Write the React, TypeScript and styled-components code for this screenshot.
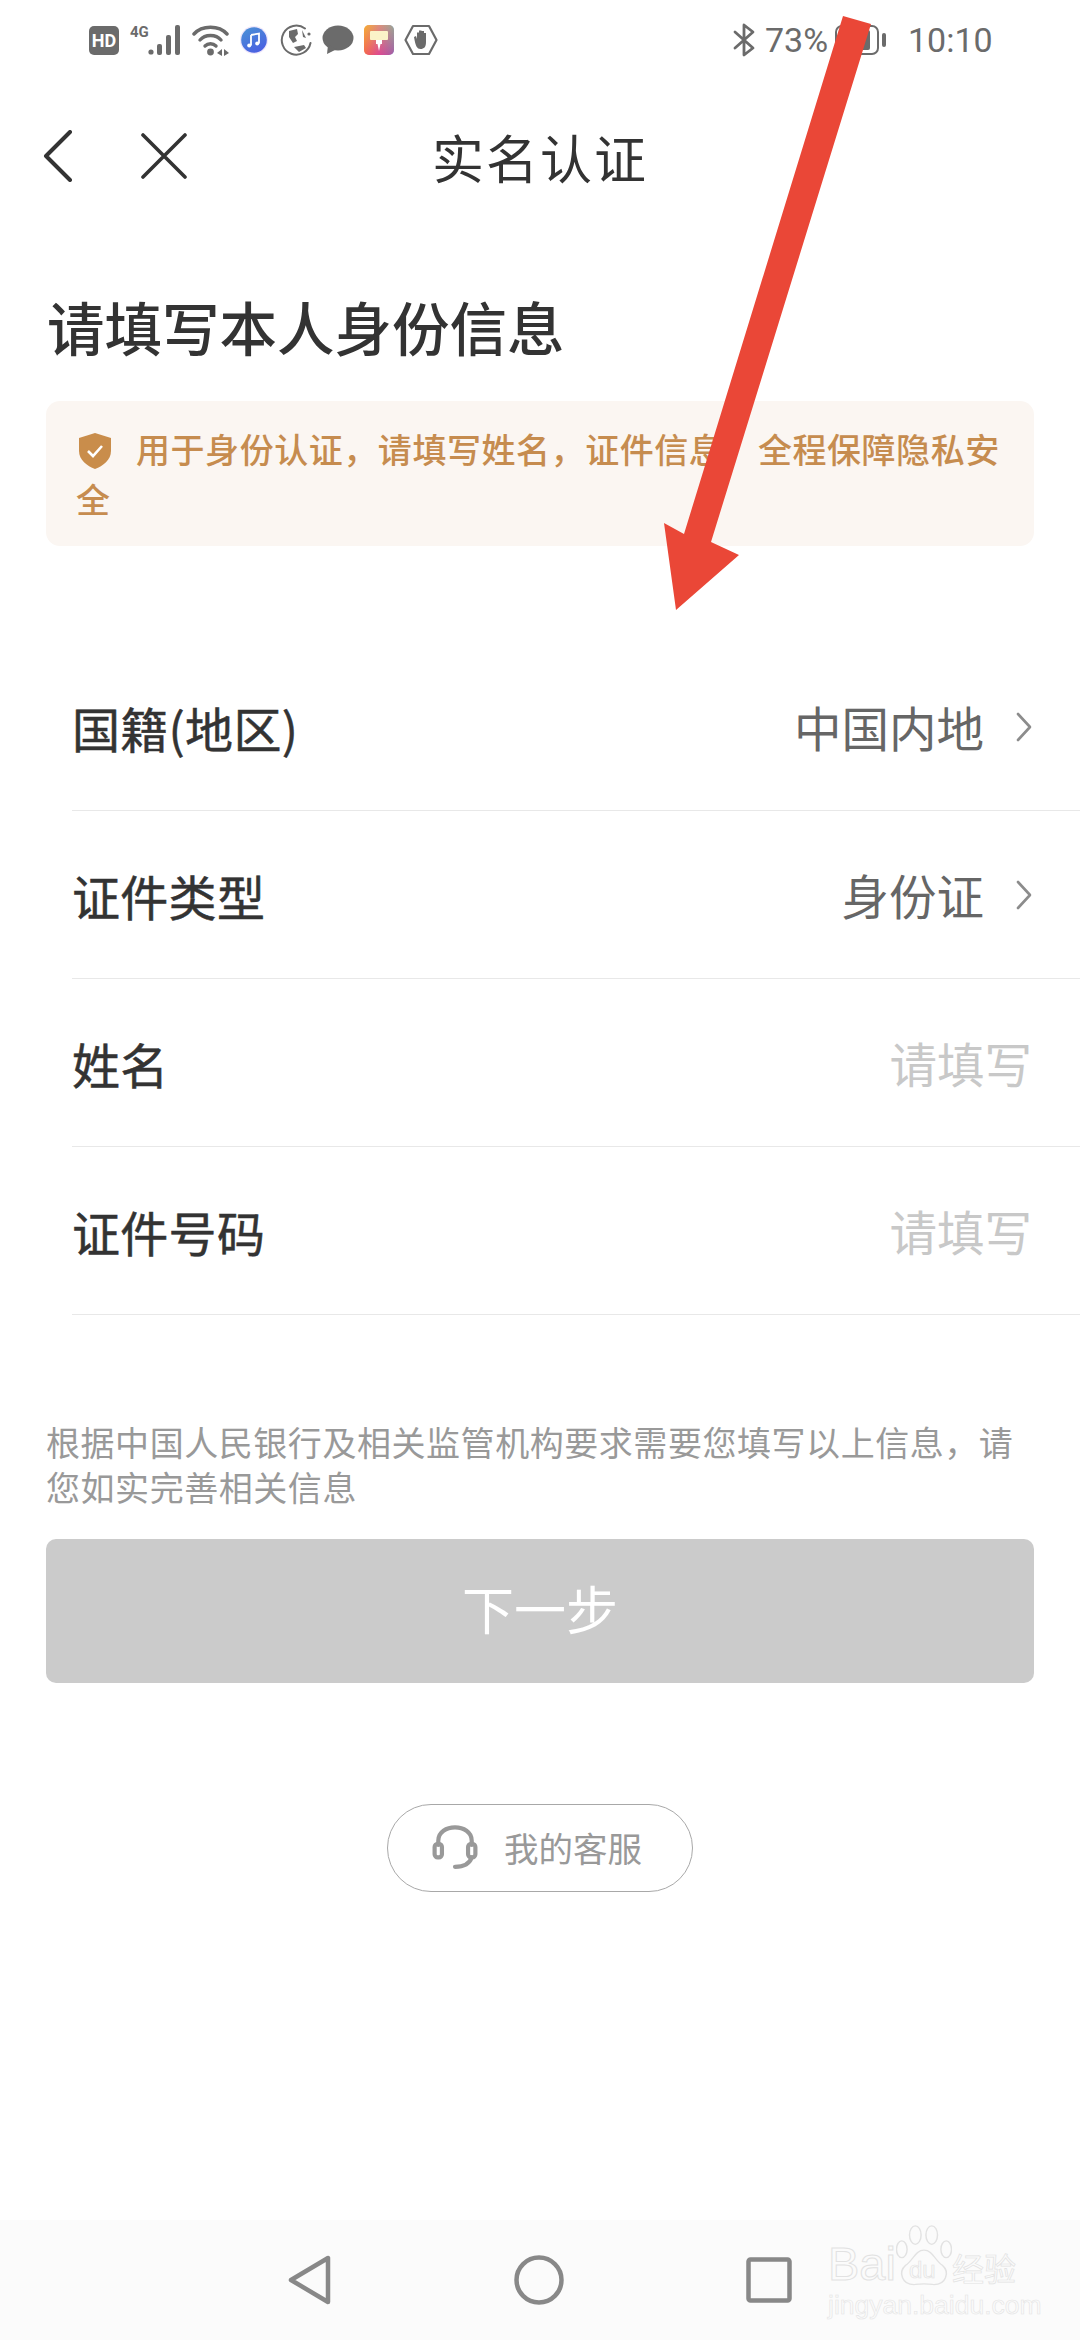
import * as React from "react";
import styled, { createGlobalStyle } from "styled-components";

const CJK = `"Noto Sans CJK SC", "Noto Sans", sans-serif`;

const Global = createGlobalStyle`
  html, body {
    margin: 0;
    padding: 0;
    background: #fff;
    font-family: ${CJK};
  }
  * { box-sizing: border-box; }
`;

const rows = [
  { label: "国籍(地区)", value: "中国内地", arrow: true },
  { label: "证件类型", value: "身份证", arrow: true },
  { label: "姓名", value: "请填写", arrow: false },
  { label: "证件号码", value: "请填写", arrow: false },
];

const App: React.FC = () => {
  return (
    <Page>
      <Global />
      <StatusBar>
        <StatusLeft>
          <HdBadge>HD</HdBadge>
          <SignalWrap>
            <FourG>4G</FourG>
            <svg width="34" height="30" viewBox="0 0 34 30">
              <circle cx="3" cy="27" r="2.6" fill="#6b6b6b" />
              <rect x="9" y="19" width="5" height="11" rx="2" fill="#6b6b6b" />
              <rect x="18" y="10" width="5" height="20" rx="2" fill="#6b6b6b" />
              <rect x="27" y="0" width="5" height="30" rx="2" fill="#6b6b6b" />
            </svg>
          </SignalWrap>
          <svg width="38" height="32" viewBox="0 0 38 32">
            <g fill="none" stroke="#6b6b6b" strokeWidth="3.4" strokeLinecap="round">
              <path d="M2 10 C 10 1, 27 1, 35 10" />
              <path d="M8 16 C 13 10, 24 10, 29 16" />
              <path d="M13 22 C 16 19, 21 19, 24 22" />
            </g>
            <circle cx="18.5" cy="28" r="3.4" fill="#6b6b6b" />
            <path d="M30 25 L25 29 L30 32 Z M32 25 L37 29 L32 32 Z" fill="#6b6b6b" />
          </svg>
          <MusicIcon>
            <svg width="28" height="28" viewBox="0 0 28 28">
              <defs>
                <linearGradient id="music" x1="0.2" y1="0" x2="0.7" y2="1">
                  <stop offset="0" stopColor="#4b8fd6" />
                  <stop offset="1" stopColor="#4a5fe2" />
                </linearGradient>
              </defs>
              <circle cx="14" cy="14" r="14" fill="#efe6fb" />
              <circle cx="14" cy="14" r="12.8" fill="url(#music)" />
              <path d="M11 9 L19 7.5 V17.5 M11 9 V19.5" fill="none" stroke="#fff" strokeWidth="1.8" />
              <circle cx="9.2" cy="19.6" r="2" fill="#fff" />
              <circle cx="17.2" cy="17.6" r="2" fill="#fff" />
            </svg>
          </MusicIcon>
          <svg width="32" height="32" viewBox="0 0 32 32">
            <path d="M25 4.5 A14.5 14.5 0 1 0 30.5 19" fill="none" stroke="#6b6b6b" strokeWidth="2" strokeLinecap="round" />
            <circle cx="29" cy="10" r="1.6" fill="#6b6b6b" />
            <path d="M9 7 L17 5 L18 10 L15 13 L17 17 L13 19 L9 13 Z M14 23 L24 21 L26 24 L19 28 Z M22 6 L26 14 L23 13 Z" fill="#6b6b6b" />
          </svg>
          <svg width="32" height="30" viewBox="0 0 32 30">
            <ellipse cx="16" cy="13" rx="15.5" ry="12.5" fill="#6b6b6b" />
            <path d="M6 20 L5 29 L15 24 Z" fill="#6b6b6b" />
          </svg>
          <svg width="30" height="30" viewBox="0 0 30 30">
            <defs>
              <linearGradient id="brushBase" x1="0" y1="0" x2="1" y2="0">
                <stop offset="0" stopColor="#f79a2e" />
                <stop offset="0.5" stopColor="#c45cc0" />
                <stop offset="1" stopColor="#3f8cf0" />
              </linearGradient>
              <linearGradient id="brushFade" x1="0" y1="0" x2="0" y2="1">
                <stop offset="0" stopColor="#f5c13a" stopOpacity="0.5" />
                <stop offset="1" stopColor="#f2386a" stopOpacity="0.55" />
              </linearGradient>
            </defs>
            <rect width="30" height="30" rx="5" fill="url(#brushBase)" />
            <rect width="30" height="30" rx="5" fill="url(#brushFade)" />
            <rect x="6" y="6" width="18" height="9" rx="1" fill="#fbf3c8" />
            <path d="M12 15 H18 V19 H16.5 L15 26 L13.5 19 H12 Z" fill="#fff" />
          </svg>
          <svg width="34" height="32" viewBox="0 0 34 32">
            <path d="M9 2 H25 L32.5 16 L25 30 H9 L1.5 16 Z" fill="none" stroke="#6b6b6b" strokeWidth="2.2" strokeLinejoin="round" />
            <path d="M10 13 L12 12 L13 15 V8.5 H15 V14 V6.5 H17.5 V14 V7 H20 V14 V9 H22 V18 C22 23 20 25 16.5 25 C13 25 11.5 22 10 13 Z" fill="#6b6b6b" />
          </svg>
        </StatusLeft>
        <StatusRight>
          <svg width="22" height="34" viewBox="0 0 22 34">
            <path d="M2 9 L20 25 L11 32 V2 L20 9 L2 25" fill="none" stroke="#6b6b6b" strokeWidth="2.8" strokeLinecap="round" strokeLinejoin="round" />
          </svg>
          <StatusText>73%</StatusText>
          <BatteryIcon>
            <svg width="51" height="30" viewBox="0 0 51 30">
              <rect x="1" y="1" width="42" height="28" rx="6" fill="none" stroke="#6b6b6b" strokeWidth="2" />
              <rect x="5" y="5" width="30" height="20" rx="2" fill="#6b6b6b" />
              <rect x="47" y="8" width="4" height="14" rx="2" fill="#6b6b6b" />
            </svg>
          </BatteryIcon>
          <StatusClock>10:10</StatusClock>
        </StatusRight>
      </StatusBar>

      <NavBar>
        <NavIcons>
          <svg width="30" height="52" viewBox="0 0 30 52">
            <path d="M27 2 L3 26 L27 50" fill="none" stroke="#333" strokeWidth="4" strokeLinecap="round" strokeLinejoin="round" />
          </svg>
          <svg width="46" height="46" viewBox="0 0 46 46">
            <path d="M2 2 L44 44 M44 2 L2 44" stroke="#333" strokeWidth="3.6" strokeLinecap="round" />
          </svg>
        </NavIcons>
        <NavTitle>实名认证</NavTitle>
      </NavBar>

      <Heading>请填写本人身份信息</Heading>

      <Notice>
        <ShieldIcon>
          <svg width="34" height="36" viewBox="0 0 34 36">
            <path d="M17 0 L33 5 V18 C33 27 25 33 17 36 C9 33 1 27 1 18 V5 Z" fill="#c98d4b" />
            <path d="M10 18 L15 23 L24 13" fill="none" stroke="#fff" strokeWidth="2.6" />
          </svg>
        </ShieldIcon>
        用于身份认证，请填写姓名，证件信息，全程保障隐私安全
      </Notice>

      <Form>
        {rows.map((row) => (
          <Row key={row.label}>
            <RowLabel>{row.label}</RowLabel>
            <RowValue $placeholder={!row.arrow}>{row.value}</RowValue>
            {row.arrow && (
              <svg width="16" height="30" viewBox="0 0 16 30">
                <path d="M2 2 L14 15 L2 28" fill="none" stroke="#8c8c8c" strokeWidth="2.6" strokeLinecap="round" strokeLinejoin="round" />
              </svg>
            )}
          </Row>
        ))}
      </Form>

      <Hint>根据中国人民银行及相关监管机构要求需要您填写以上信息，请您如实完善相关信息</Hint>

      <NextButton>下一步</NextButton>

      <SupportWrap>
        <SupportPill>
          <svg width="46" height="46" viewBox="0 0 44 44">
            <g fill="none" stroke="#999" strokeWidth="4" strokeLinecap="round">
              <path d="M6 20 V16 C6 -1 38 -1 38 16 V20" />
              <rect x="2.5" y="19" width="7" height="13" rx="3" />
              <rect x="34.5" y="19" width="7" height="13" rx="3" />
              <path d="M38 32 C36 38 30 41 22 41" />
            </g>
          </svg>
          <SupportText>我的客服</SupportText>
        </SupportPill>
      </SupportWrap>

      <BottomNav>
        <svg width="44" height="50" viewBox="0 0 44 50">
          <path d="M40 3 V47 L3 25 Z" fill="none" stroke="#888" strokeWidth="4.5" strokeLinejoin="round" />
        </svg>
        <svg width="50" height="50" viewBox="0 0 50 50">
          <circle cx="25" cy="25" r="22.5" fill="none" stroke="#888" strokeWidth="4.5" />
        </svg>
        <svg width="46" height="46" viewBox="0 0 46 46">
          <rect x="2.5" y="2.5" width="41" height="41" rx="2" fill="none" stroke="#888" strokeWidth="4.5" />
        </svg>
      </BottomNav>

      <Watermark>
        <WatermarkTop>
          <WatermarkWord>Bai</WatermarkWord>
          <PawBox>
            <svg width="56" height="62" viewBox="0 0 58 74" preserveAspectRatio="none">
              <g fill="none" stroke="#e2e2e2" strokeWidth="1.5">
                <ellipse cx="6" cy="29" rx="5.5" ry="10" />
                <ellipse cx="20" cy="12" rx="6" ry="11" />
                <ellipse cx="37" cy="12" rx="6" ry="11" />
                <ellipse cx="52" cy="29" rx="5.5" ry="10" />
                <path d="M29 30 C38 30 40 42 48 48 C56 56 52 72 38 71 C32 70 26 70 20 71 C6 72 2 56 10 48 C18 42 20 30 29 30 Z" />
              </g>
            </svg>
            <PawText>du</PawText>
          </PawBox>
          <WatermarkCn>经验</WatermarkCn>
        </WatermarkTop>
        <WatermarkUrl>jingyan.baidu.com</WatermarkUrl>
      </Watermark>

      <ArrowOverlay width="1080" height="2340" viewBox="0 0 1080 2340">
        <polygon
          points="843,16 871,24 711,542 739,555 676,610 664,523 684,534"
          fill="#ea4737"
        />
      </ArrowOverlay>
    </Page>
  );
};

const Page = styled.div`
  position: relative;
  width: 1080px;
  height: 2340px;
  display: flex;
  flex-direction: column;
  overflow: hidden;
  background: #fff;
`;

const StatusBar = styled.div`
  height: 80px;
  padding: 0 90px 0 89px;
  display: flex;
  align-items: center;
  justify-content: space-between;
`;

const StatusLeft = styled.div`
  display: flex;
  align-items: center;
  gap: 10px;
`;

const StatusRight = styled.div`
  display: flex;
  align-items: center;
`;

const HdBadge = styled.div`
  width: 30px;
  height: 29px;
  border-radius: 5px;
  background: #6b6b6b;
  color: #fff;
  font: 700 18px/29px Roboto, sans-serif;
  text-align: center;
`;

const SignalWrap = styled.div`
  display: flex;
  align-items: flex-end;
  height: 30px;
  margin-left: 1px;
`;

const FourG = styled.span`
  align-self: flex-start;
  font: 700 15px/15px Roboto, sans-serif;
  color: #6b6b6b;
  margin-right: -1px;
`;

const MusicIcon = styled.div`
  display: flex;
  margin-right: 2px;
`;

const StatusText = styled.span`
  font: 400 34px/40px Roboto, sans-serif;
  color: #6b6b6b;
  margin-left: 10px;
  width: 63px;
  white-space: nowrap;
`;

const BatteryIcon = styled.div`
  display: flex;
  margin-left: 7px;
`;

const StatusClock = styled(StatusText)`
  margin-left: 22px;
  width: 82px;
`;

const NavBar = styled.div`
  position: relative;
  height: 156px;
  display: flex;
  align-items: center;
  justify-content: center;
`;

const NavIcons = styled.div`
  position: absolute;
  left: 43px;
  top: 50px;
  display: flex;
  align-items: center;
  gap: 68px;
`;

const NavTitle = styled.div`
  font-size: 52px;
  line-height: 60px;
  letter-spacing: 2px;
  color: #333;
  margin-top: -2px;
`;

const Heading = styled.h1`
  margin: 50px 0 0 47px;
  font-size: 57.5px;
  line-height: 80px;
  font-weight: 500;
  color: #333;
`;

const Notice = styled.div`
  margin: 35px 46px 0;
  height: 145px;
  padding: 23px 30px 0 30px;
  border-radius: 14px;
  background: #fbf6f2;
  color: #c68c4f;
  font-size: 34px;
  line-height: 50px;
  font-weight: 500;
  letter-spacing: 0.55px;
`;

const ShieldIcon = styled.span`
  display: inline-block;
  width: 60px;
  height: 36px;
  vertical-align: -6px;
  padding-left: 2px;
`;

const Form = styled.div`
  margin-top: 97px;
  padding-left: 72px;
`;

const Row = styled.div`
  height: 168px;
  padding: 0 48px 0 0;
  display: flex;
  align-items: center;
  border-bottom: 1px solid #e8e8e8;
`;

const RowLabel = styled.div`
  flex: 1;
  font-size: 48px;
  letter-spacing: 0.3px;
  color: #333;
  font-weight: 400;
  -webkit-text-stroke: 0.5px #333;
`;

const RowValue = styled.div<{ $placeholder: boolean }>`
  font-size: 47.5px;
  color: ${(p) => (p.$placeholder ? "#c8c8c8" : "#666")};
  margin-right: ${(p) => (p.$placeholder ? "0" : "32px")};
`;

const Hint = styled.div`
  margin: 104px 46px 0;
  font-size: 34px;
  line-height: 45px;
  color: #999;
  letter-spacing: 0.55px;
`;

const NextButton = styled.div`
  margin: 30px 46px 0;
  height: 144px;
  padding-bottom: 8px;
  border-radius: 10px;
  background: #cbcbcb;
  color: #fff;
  font-size: 52px;
  display: flex;
  align-items: center;
  justify-content: center;
`;

const SupportWrap = styled.div`
  margin-top: 121px;
  display: flex;
  justify-content: center;
`;

const SupportPill = styled.div`
  width: 306px;
  height: 88px;
  border-radius: 44px;
  border: 1px solid #a8a8a8;
  display: flex;
  align-items: center;
  justify-content: center;
  gap: 26px;
  padding: 0 6px 3px 0;
`;

const SupportText = styled.span`
  font-size: 34.5px;
  color: #999;
`;

const BottomNav = styled.div`
  margin-top: auto;
  height: 120px;
  background: #fbfbfb;
  padding: 0 288px;
  display: flex;
  align-items: center;
  justify-content: space-between;
`;

const Watermark = styled.div`
  position: absolute;
  left: 828px;
  top: 2225px;
  width: 195px;
  color: #fff;
`;

const WatermarkTop = styled.div`
  display: flex;
  align-items: flex-end;
  height: 62px;
`;

const WatermarkWord = styled.span`
  font: 400 47px/46px "Liberation Sans", sans-serif;
  -webkit-text-stroke: 1px #e2e2e2;
  color: #fbfbfb;
`;

const PawBox = styled.div`
  position: relative;
  display: flex;
  width: 56px;
  margin: 0;
`;

const PawText = styled.span`
  position: absolute;
  left: 13px;
  top: 33px;
  font: 400 24px/24px "Liberation Sans", sans-serif;
  -webkit-text-stroke: 0.7px #e2e2e2;
  color: #fbfbfb;
`;

const WatermarkCn = styled.span`
  font-size: 32px;
  line-height: 40px;
  -webkit-text-stroke: 0.7px #e2e2e2;
  color: #fbfbfb;
  white-space: nowrap;
`;

const WatermarkUrl = styled.div`
  margin-top: 4px;
  font: 400 26.5px/28px "Liberation Sans", sans-serif;
  -webkit-text-stroke: 0.6px #e4e4e4;
  color: #fbfbfb;
  white-space: nowrap;
`;

const ArrowOverlay = styled.svg`
  position: absolute;
  left: 0;
  top: 0;
  pointer-events: none;
`;

export default App;
